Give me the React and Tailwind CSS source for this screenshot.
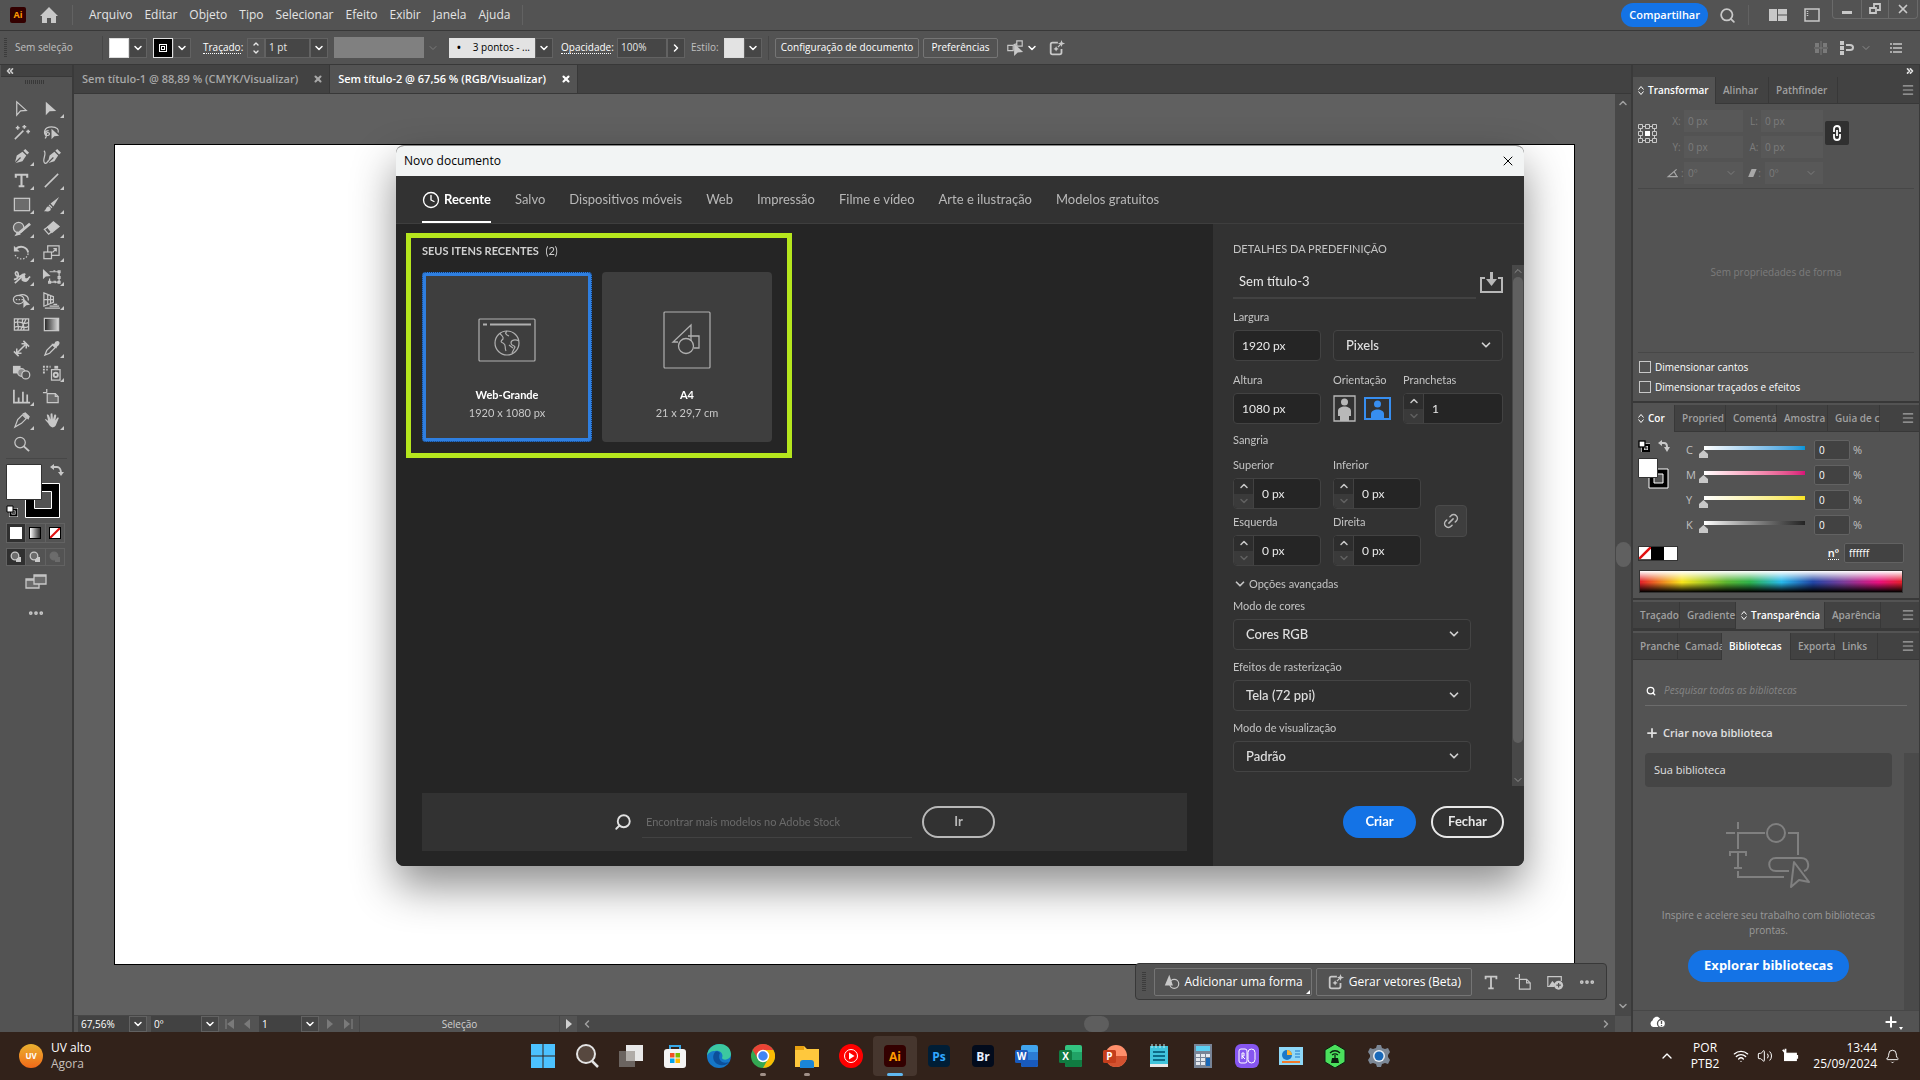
import React from 'react'
import {
  ChevronDown,
  ChevronUp,
  ChevronRight,
  ChevronLeft,
  ChevronsLeft,
  ChevronsRight,
  Search,
  Menu,
  X,
  Plus,
  Link2,
  Wifi,
  Volume2,
  Bell,
  Clock,
  MoreHorizontal,
} from 'lucide-react'

const menus = ['Arquivo', 'Editar', 'Objeto', 'Tipo', 'Selecionar', 'Efeito', 'Exibir', 'Janela', 'Ajuda']

const Svg = ({ className = 'size-5', box = '0 0 20 20', children }) => (
  <svg className={className} viewBox={box} fill="none" stroke="currentColor" strokeWidth="1.3" aria-hidden="true">
    {children}
  </svg>
)

// Tool palette, two columns, read row by row. "more" draws the corner flyout mark.
const tools = [
  { name: 'Seleção', icon: <path d="M5 3v14l4-4.5 6-.5z" /> },
  { name: 'Seleção direta', more: true, icon: <path d="M4 3v14l4-4 7-.5z" fill="currentColor" stroke="none" /> },
  {
    name: 'Varinha mágica',
    icon: <path d="M3 17 12 8m1-6v4m-2-2h4M17 7v4m-2-2h4M6 3v4M4 5h4M10 10l2-2" strokeWidth="1.6" />,
  },
  {
    name: 'Laço',
    icon: (
      <>
        <path d="M5 14C1 11 2 4 10 4c6 0 8 3 7 6M7 8c-4 0-5 4-2 5s4-3 1-3 0 6-3 6" />
        <path d="M10 6v11l3-3 5-.5z" fill="currentColor" stroke="none" />
      </>
    ),
  },
  {
    name: 'Caneta',
    more: true,
    icon: (
      <>
        <path d="M3 17 5 9l6-4 4 4-4 6zM12 4l2-2 4 4-2 2z" fill="currentColor" stroke="none" />
        <path d="m3 17 6-6" stroke="#535353" />
      </>
    ),
  },
  {
    name: 'Curvatura',
    icon: (
      <>
        <path d="m6 17 2-8 5-4 4 4-4 6zM14 4l2-2 4 4-2 2z" fill="currentColor" stroke="none" />
        <path d="m6 17 6-6" stroke="#535353" />
        <path d="M2 4c4 3-3 10 1 13 2 1 3-2 4-3" />
      </>
    ),
  },
  {
    name: 'Texto',
    more: true,
    icon: <path d="M4 7V4h12v3M10 4v12M7 16h6" strokeWidth="2.2" />,
  },
  { name: 'Segmento de linha', more: true, icon: <path d="M3 17 17 3" strokeWidth="1.6" /> },
  { name: 'Retângulo', more: true, icon: <rect x="2.5" y="3.500" width="16" height="13" fill="#6c6c6c" /> },
  {
    name: 'Pincel',
    more: true,
    icon: (
      <path
        d="M18 2 9 9l3 3zM8 10l3 3-1 1-3-3zM6 12c2 0 4 2 3 4-2 2-5 1-7 1 2-1 2-4 4-5z"
        fill="currentColor"
        stroke="none"
      />
    ),
  },
  {
    name: 'Shaper',
    more: true,
    icon: (
      <>
        <circle cx="7" cy="9" r="5.500" fill="#6c6c6c" />
        <path d="M7 15 19 5" strokeWidth="3" />
        <path d="m4 17 4-1-2-2z" fill="currentColor" />
      </>
    ),
  },
  {
    name: 'Borracha',
    more: true,
    icon: (
      <>
        <path d="m2.500 11 4.500 5 3-2.500L6 8.500z" />
        <path d="m6 8.500 6-5.500 6 5-7.500 6z" fill="currentColor" />
      </>
    ),
  },
  {
    name: 'Girar',
    more: true,
    icon: (
      <>
        <path d="M4 6c5-4 12-2 13 4" strokeWidth="2" />
        <path d="M2 3v6h6z" fill="currentColor" stroke="none" />
        <path d="M17 11c-1 7-11 8-14 1" strokeDasharray="1.500 1.800" />
      </>
    ),
  },
  {
    name: 'Escala',
    more: true,
    icon: (
      <>
        <rect x="6" y="3" width="12" height="10" />
        <rect x="2" y="9.500" width="8" height="7" fill="#535353" />
        <path d="m11 10 4-4m-3 0h3v3" />
      </>
    ),
  },
  {
    name: 'Largura',
    more: true,
    icon: (
      <>
        <path d="M2 13c6 0 5-8 3-8s-2 4 1 5 7-5 7 0 3 4 6 0M3 17 14 7" strokeWidth="1.800" />
        <path d="M10 8c2-3 4 0 3 2s3 3 5 1c0 5-5 6-8 3z" fill="currentColor" stroke="none" />
      </>
    ),
  },
  {
    name: 'Transformação livre',
    more: true,
    icon: (
      <>
        <path d="M1 2v11l3-3 5-.5z" fill="currentColor" stroke="none" />
        <path d="M8 5h10v11H8v-4" />
        <path d="M12 4h2M17 4h2v2h-2zM17 10h2v2h-2zM17 15h2v2h-2zM12 15h2v2M7 15h2v2H7z" />
      </>
    ),
  },
  {
    name: 'Construtor de formas',
    more: true,
    icon: (
      <>
        <ellipse cx="7" cy="9" rx="5.500" ry="4.500" />
        <path d="M7 5c6-3 11 1 10 5" />
        <path d="M4 9h9" strokeDasharray="1.500 1.500" />
        <path d="M12 8v10l3-3 4-.5z" fill="currentColor" stroke="none" />
      </>
    ),
  },
  {
    name: 'Grade de perspectiva',
    more: true,
    icon: <path d="M2 2v14l10-4V6zM2 9h10M6 4v10M9 5v8M3 18h16M8 16h10M12 14h4" />,
  },
  {
    name: 'Malha',
    icon: <path d="M2.500 4h15v12h-15zM3 8c5-3 9 3 14 0M3 13c5-4 8 3 14-1M6 16C9 12 3 8 7 4M12 16c3-4-4-8 0-12M15 4l-6 12" />,
  },
  {
    name: 'Gradiente',
    icon: (
      <>
        <defs>
          <linearGradient id="toolGradient">
            <stop stopColor="#222" />
            <stop offset="1" stopColor="#ddd" />
          </linearGradient>
        </defs>
        <rect x="2.500" y="3.500" width="15" height="13" fill="url(#toolGradient)" />
      </>
    ),
  },
  {
    name: 'Cota',
    icon: <path d="m5 15 9-9M5 10v5h5M10 5h5v5M2 13l5 5M12 2l6 6" strokeWidth="1.600" />,
  },
  {
    name: 'Conta-gotas',
    more: true,
    icon: (
      <>
        <path d="m3 17 2-5 6-6 3 3-6 6z" />
        <path d="m10 5 5 5 1-2c4-2 3-8-2-5l-1 2z" fill="currentColor" stroke="none" />
      </>
    ),
  },
  {
    name: 'Mistura',
    icon: (
      <>
        <path d="M1 3h8v8H1z" fill="currentColor" stroke="none" />
        <circle cx="10" cy="10" r="4" fill="#8a8a8a" />
        <circle cx="14.500" cy="12.500" r="4.200" fill="#535353" />
      </>
    ),
  },
  {
    name: 'Pulverizador',
    more: true,
    icon: (
      <>
        <path d="M1 4h8M1 7h5M1 10h3" strokeDasharray="2 1.500" strokeWidth="2" />
        <path d="M13 3h4v3h-4z" fill="currentColor" stroke="none" />
        <rect x="10" y="7" width="9" height="11" />
        <circle cx="14.500" cy="12.500" r="2.200" strokeWidth="2" />
      </>
    ),
  },
  { name: 'Gráfico', more: true, icon: <path d="M2 3v13.500h17M7 16v-5M11.500 16V5M16 16V8" strokeWidth="1.800" /> },
  {
    name: 'Prancheta',
    icon: (
      <>
        <path d="M5 2v4M1 6h4M5.500 7H14l3 3v6.500H5.500z" fill="#6c6c6c" />
        <path d="M14 7v3h3" />
      </>
    ),
  },
  {
    name: 'Fatia',
    more: true,
    icon: (
      <>
        <path d="M3 17 6 9l5-5 4 4-5 5z" />
        <path d="m12 3 2-1 4 4-1 2z" fill="currentColor" />
      </>
    ),
  },
  {
    name: 'Mão',
    more: true,
    icon: (
      <path
        d="M6.500 13 3 9c1-1 2 0 3.500 1.500L5 4c1-1 2 0 2.500 1L9 9V3c1-1 2-1 2 0l.5 6L13 4c1-1 2 0 2 1l-1 5 2-3c1-.5 2 0 1.500 1L15 14c-1 4-6 5-8.500-1z"
        fill="currentColor"
        stroke="none"
      />
    ),
  },
  {
    name: 'Zoom',
    icon: (
      <>
        <circle cx="8.500" cy="8" r="5.500" />
        <path d="m12.500 12 5.500 5" strokeWidth="2" />
      </>
    ),
  },
]

const SparkBox = ({ className }) => (
  <Svg className={className}>
    <path d="M11 4H5a2 2 0 0 0-2 2v9a2 2 0 0 0 2 2h8a2 2 0 0 0 2-2v-4" strokeWidth="2" />
    <path d="m15 1 1 3 3 1-3 1-1 3-1-3-3-1 3-1zM9 8l1 2 2 1-2 1-1 2-1-2-2-1 2-1z" fill="currentColor" stroke="none" />
    <path d="m11 9 4-4" />
  </Svg>
)

const SwapIcon = ({ className }) => (
  <Svg className={className} box="0 0 12 12">
    <path d="M3 3h3c2 0 3 1 3 4" strokeWidth="2" />
    <path d="M0 3l4-3v6zM6 7h6l-3 5z" fill="currentColor" stroke="none" />
  </Svg>
)

const DefaultColors = ({ className }) => (
  <Svg className={className} box="0 0 12 12">
    <rect x="5" y="5" width="6" height="6" fill="none" stroke="#fff" strokeWidth="3" />
    <rect x="5" y="5" width="6" height="6" fill="none" stroke="#000" strokeWidth="2" />
    <rect x="1" y="1" width="6" height="6" fill="#fff" stroke="#000" />
  </Svg>
)

const NoneSwatch = ({ className }) => (
  <svg className={className} viewBox="0 0 12 12" aria-hidden="true">
    <path d="M0 0h12v12H0z" fill="#fff" />
    <path d="M0 12 12 0" stroke="#e01010" strokeWidth="2.500" />
  </svg>
)

const MenuBar = () => (
  <header className="flex h-[31px] shrink-0 items-center border-b border-[#383838] pl-2.5">
    <span className="flex size-4 items-center justify-center rounded-xs bg-[#330000] text-[9px] font-bold text-[#ff9a00]">Ai</span>
    <svg className="ml-3.5 size-[18px] fill-[#c8c8c8]" viewBox="0 0 18 18" aria-hidden="true">
      <path d="M9 1 0 10h2v7h5v-5h4v5h5v-7h2z" />
    </svg>
    <span className="mr-2.5 ml-3.5 h-5 w-px bg-[#626262]" />
    <nav className="flex">
      {menus.map((menu) => (
        <button key={menu} className="px-1.5 text-xs text-[#e4e4e4]">{menu}</button>
      ))}
    </nav>
    <span className="ml-1.5 h-5 w-px bg-[#626262]" />
    <button className="ml-auto h-6 rounded-full bg-[#1473e6] px-2 text-[11px] font-semibold text-white">Compartilhar</button>
    <button aria-label="Pesquisar" className="ml-[11px] text-[#c8c8c8]"><Search className="size-[17px]" strokeWidth={2.500} /></button>
    <span className="mr-5 ml-3 h-5 w-px bg-[#626262]" />
    <button aria-label="Espaços de trabalho" className="text-[#c8c8c8]">
      <svg className="h-3 w-[18px] fill-current" viewBox="0 0 18 12" aria-hidden="true"><path d="M0 0h8v12H0zM9 0h9v5.500H9zM9 6.500h9V12H9z" /></svg>
    </button>
    <button aria-label="Painel" className="ml-[17px] text-[#c8c8c8]">
      <Svg className="h-[14px] w-4" box="0 0 16 14"><path d="M1 1h14v12H1z" strokeWidth="1.500" /><path d="M3.500 3v6" strokeWidth="1.500" strokeDasharray="1 1" /></Svg>
    </button>
    <div className="mr-0.5 ml-3 flex h-[19px] self-start rounded-b border border-t-0 border-[#6a6a6a] text-[#c8c8c8]">
      <button aria-label="Minimizar" className="flex w-7 items-end justify-center pb-1"><span className="h-[3px] w-2.5 bg-current" /></button>
      <button aria-label="Restaurar" className="flex w-7 items-center justify-center border-x border-[#6a6a6a]">
        <Svg className="size-3" box="0 0 12 12"><path d="M1 5h6v5H1zM5 4V1h6v6H8" strokeWidth="1.800" /></Svg>
      </button>
      <button aria-label="Fechar aplicativo" className="flex w-7 items-center justify-center"><X className="size-3.5" strokeWidth={3} /></button>
    </div>
  </header>
)

const DropArrow = ({ label }) => (
  <button aria-label={label} className="flex w-[18px] items-center justify-center border border-[#626262] bg-[#464646] text-white">
    <ChevronDown className="size-3" strokeWidth={3} />
  </button>
)

const OptionsBar = () => (
  <div className="flex h-[34px] shrink-0 items-center border-b border-[#383838] pl-1 text-[11px] text-[#e8e8e8]">
    <span className="h-5 w-[3px] bg-[repeating-linear-gradient(#3c3c3c_0_1px,transparent_1px_2px)]" />
    <span className="ml-2 w-[87px] text-[10px] text-[#c0c0c0]">Sem seleção</span>
    <span className="mr-1.5 h-6 w-px bg-[#474747]" />
    <div className="flex h-5">
      <span className="w-5 border border-[#ddd] bg-white" />
      <DropArrow label="Preenchimento" />
    </div>
    <div className="ml-1.5 flex h-5">
      <span className="flex w-5 items-center justify-center border border-[#e0e0e0] bg-black">
        <span className="flex size-2 items-center justify-center border border-white"><span className="size-1 border border-white" /></span>
      </span>
      <DropArrow label="Cor do traçado" />
    </div>
    <label htmlFor="stroke" className="ml-3 w-[38px] border-b border-dotted border-white text-[10px] leading-3 font-medium text-white">Traçado:</label>
    <div className="ml-1.5 flex h-5">
      <div className="flex w-[18px] flex-col items-center justify-center border border-[#626262]">
        <button aria-label="Aumentar traçado"><ChevronUp className="h-2 w-3" strokeWidth={4} /></button>
        <button aria-label="Diminuir traçado"><ChevronDown className="h-2 w-3" strokeWidth={4} /></button>
      </div>
      <input id="stroke" defaultValue="1 pt" className="w-[45px] border border-[#626262] bg-[#464646] px-[3px] text-[10px]" />
      <DropArrow label="Espessura" />
    </div>
    <span className="ml-1.5 h-[21px] w-[90px] bg-[#808080]" />
    <ChevronDown className="ml-[3px] size-3 text-[#7a7a7a]" />
    <div className="ml-2.5 flex h-5">
      <span className="flex w-[86px] items-center bg-[#e3e3e3] pl-2 text-[10px] font-medium whitespace-nowrap text-black"><b className="mr-3">•</b>3 pontos - ...</span>
      <DropArrow label="Pincel" />
    </div>
    <label htmlFor="opacity" className="ml-2 w-[50px] border-b border-dotted border-white text-[10px] leading-3 text-white">Opacidade:</label>
    <div className="ml-1.5 flex h-5">
      <input id="opacity" defaultValue="100%" className="w-[50px] border border-[#626262] bg-[#464646] px-[3px] text-[10px]" />
      <button aria-label="Abrir opacidade" className="flex w-[18px] items-center justify-center border border-[#626262] bg-[#464646] text-white"><ChevronRight className="size-3" strokeWidth={3} /></button>
    </div>
    <span className="ml-1.5 w-[33px] text-[10px] text-[#c0c0c0]">Estilo:</span>
    <div className="flex h-5">
      <span className="w-5 border border-[#ddd] bg-[#e3e3e3]" />
      <DropArrow label="Estilo" />
    </div>
    <span className="mr-1.5 ml-1.5 h-6 w-px bg-[#474747]" />
    <button className="h-5 w-[144px] rounded-xs border border-[#757575] text-[10px] font-medium text-white">Configuração de documento</button>
    <button className="ml-1 h-5 w-[75px] rounded-xs border border-[#757575] text-[10px] font-medium text-white">Preferências</button>
    <button aria-label="Selecionar semelhantes" className="ml-2 text-[#c8c8c8]">
      <Svg className="size-[18px]"><path d="M2 7h6v6H2zM12 2h6v6h-6zM8 7l4-2" /><path d="M9 5v14l4-4 6-.5z" fill="currentColor" stroke="none" /></Svg>
    </button>
    <ChevronDown className="ml-0.5 size-3 text-white" strokeWidth={3} />
    <button aria-label="Gerar" className="ml-2.5 text-[#c8c8c8]"><SparkBox className="size-[18px]" /></button>
    <div className="mr-[18px] ml-auto flex items-center text-[#c8c8c8]">
      <Svg className="size-3.5 text-[#7a7a7a]" box="0 0 14 14"><path d="M1 2h4v4H1zM9 2h4v4H9zM1 8h4v4H1zM9 8h4v4H9z" fill="currentColor" stroke="none" /><path d="M7 0v14M0 7h14" strokeWidth="1" /></Svg>
      <Svg className="ml-3 size-3.5" box="0 0 14 14"><path d="M0 0h4v4H0zM0 5h4v4H0zM0 10h4v4H0z" fill="currentColor" stroke="none" /><path d="M6 4h4c4 0 4 5 0 5H6" strokeWidth="2" /></Svg>
      <ChevronDown className="mx-1.5 size-3 text-[#8a8a8a]" />
      <Svg className="ml-3 h-[10px] w-3" box="0 0 12 10"><path d="M0 1h2M3 1h9M0 5h2M3 5h9M0 9h2M3 9h9" strokeWidth="1.600" /></Svg>
    </div>
  </div>
)

const Toolbar = () => (
  <aside className="flex w-[74px] shrink-0 flex-col border-r-2 border-[#3a3a3a] pl-px text-[#c8c8c8]">
    <button aria-label="Recolher ferramentas" className="flex h-3 shrink-0 items-center border-b border-[#383838] bg-[#424242] pl-1"><ChevronsLeft className="size-2.5" strokeWidth={4} /></button>
    <span className="mt-[3px] ml-6 h-1 w-5 shrink-0 bg-[repeating-linear-gradient(90deg,#383838_0_1px,transparent_1px_2px)]" />
    <div className="mt-3 grid h-[360px] shrink-0 grid-cols-[30px_30px] grid-rows-[repeat(15,24px)] pl-[5px]">
      {tools.map((tool) => (
        <button key={tool.name} aria-label={tool.name} className="relative flex items-center justify-center">
          <Svg className="size-[19px]">{tool.icon}</Svg>
          {tool.more && <span className="absolute right-0.5 bottom-0.5 border-b-4 border-l-4 border-b-[#c8c8c8] border-l-transparent" />}
        </button>
      ))}
    </div>
    <span className="mx-[5px] mt-0.5 h-px shrink-0 bg-[#474747]" />
    <svg className="mt-1 ml-1 h-14 w-[60px] shrink-0" viewBox="0 0 60 56" aria-hidden="true">
      <path d="M20.500 20.500h34v34h-34z" fill="#000" stroke="#fff" />
      <path d="M29.500 28.500h17v17h-17z" fill="#535353" stroke="#fff" />
      <path d="M1.500 1.500h35v35h-35z" fill="#fff" stroke="#333" />
      <path d="M48 4h4c2 0 4 2 4 6" stroke="#c8c8c8" strokeWidth="2" fill="none" />
      <path d="m45 4 4-3v6zM53 9h6l-3 4z" fill="#c8c8c8" />
      <path d="M5.500 46.500h6v6h-6z" fill="none" stroke="#fff" strokeWidth="3" />
      <path d="M5.500 46.500h6v6h-6z" fill="none" stroke="#000" strokeWidth="2" />
      <path d="M2 43h6v6H2z" fill="#fff" stroke="#000" />
    </svg>
    <div className="mt-1 ml-[5px] flex h-5 w-[59px] shrink-0 border border-[#626262]">
      <button aria-label="Cor" className="flex flex-1 items-center justify-center bg-[#303030]"><span className="size-3 bg-white" /></button>
      <button aria-label="Gradiente sólido" className="flex flex-1 items-center justify-center border-x border-[#626262]"><span className="size-3 border border-black bg-linear-to-r from-white to-[#333]" /></button>
      <button aria-label="Nenhum" className="flex flex-1 items-center justify-center"><NoneSwatch className="size-3 border border-black" /></button>
    </div>
    <div className="mt-[5px] ml-[5px] flex h-[18px] w-[59px] shrink-0 border border-[#626262]">
      {['bg-[#303030] text-[#c8c8c8]', 'border-x border-[#626262] text-[#c8c8c8]', 'text-[#6c6c6c]'].map((style, i) => (
        <button key={style} aria-label={`Modo de desenho ${i + 1}`} className={`flex flex-1 items-center justify-center ${style}`}>
          <Svg className="size-3" box="0 0 12 12"><path d="M6 6h5v5H6z" fill="currentColor" stroke="none" /><circle cx="5" cy="5" r="3.800" fill="#6c6c6c" /><path d="M7 7h4v4H7z" fill="currentColor" stroke="none" /></Svg>
        </button>
      ))}
    </div>
    <button aria-label="Modo de tela" className="mt-2 ml-6 w-[22px]">
      <Svg className="h-4 w-[22px]" box="0 0 22 16"><path d="M1 5h13v9H1z" fill="#6c6c6c" /><path d="M9 1h12v9H9z" fill="#6c6c6c" /><path d="M9 2h12M1 6h8" /></Svg>
    </button>
    <button aria-label="Editar barra" className="mt-3.5 ml-[26px] w-5"><MoreHorizontal className="size-[18px]" strokeWidth={3} /></button>
  </aside>
)

const DocTab = ({ title, active }) => (
  <div className={active ? 'flex items-center border-r border-[#383838] bg-[#535353] pr-1.5 pl-2 text-white' : 'flex items-center border-r border-[#383838] pr-1.5 pl-2 text-[#a8a8a8]'}>
    <button className="text-[11px] font-semibold">{title}</button>
    <button aria-label={`Fechar ${title}`} className="ml-[15px]"><X className="size-2.5" strokeWidth={5} /></button>
  </div>
)

const StatusBar = () => (
  <div className="flex h-[17px] shrink-0 items-stretch border-t border-[#474747] bg-[#535353] text-[10px] text-white">
    <input aria-label="Zoom" defaultValue="67,56%" className="ml-1 w-[51px] bg-[#424242] px-[3px]" />
    <DropArrow label="Níveis de zoom" />
    <input aria-label="Rotação" defaultValue="0º" className="ml-1 w-[50px] bg-[#424242] px-[3px]" />
    <DropArrow label="Níveis de rotação" />
    <div className="flex w-10 items-center justify-center gap-2 text-[#7a7a7a]">
      <Svg className="size-2.5" box="0 0 10 10"><path d="M1 0v10" /><path d="M9 0v10L2 5z" fill="currentColor" stroke="none" /></Svg>
      <Svg className="size-2.5" box="0 0 10 10"><path d="M7 0v10L1 5z" fill="currentColor" stroke="none" /></Svg>
    </div>
    <input aria-label="Prancheta atual" defaultValue="1" className="w-[42px] bg-[#424242] px-[3px]" />
    <DropArrow label="Pranchetas" />
    <div className="flex w-10 items-center justify-center gap-2 text-[#7a7a7a]">
      <Svg className="size-2.5" box="0 0 10 10"><path d="M2 0v10l6-5z" fill="currentColor" stroke="none" /></Svg>
      <Svg className="size-2.5" box="0 0 10 10"><path d="M9 0v10" /><path d="M1 0v10l6-5z" fill="currentColor" stroke="none" /></Svg>
    </div>
    <span className="w-[201px] border-x border-[#474747] text-center leading-[17px] text-[#d0d0d0]">Seleção</span>
    <button aria-label="Mostrar" className="flex w-[17px] items-center justify-center">
      <Svg className="size-2.5 text-[#d0d0d0]" box="0 0 10 10"><path d="M2 0v10l6-5z" fill="currentColor" stroke="none" /></Svg>
    </button>
    <div className="flex flex-1 items-center bg-[#484848] text-[#a0a0a0]">
      <button aria-label="Rolar para a esquerda" className="ml-1"><ChevronLeft className="size-3" strokeWidth={3} /></button>
      <div className="flex flex-1 justify-center"><span className="h-4 w-[25px] rounded-full bg-[#5e5e5e]" /></div>
      <button aria-label="Rolar para a direita" className="mr-[3px]"><ChevronRight className="size-3" strokeWidth={3} /></button>
    </div>
    <span className="w-4" />
  </div>
)

const ContextBar = () => (
  <div className="absolute right-2 bottom-[15px] flex h-[37px] items-center rounded-sm border border-[#383838] bg-[#535353] text-[#c8c8c8]">
    <span className="mr-2 ml-1.5 h-5 w-1 bg-[repeating-linear-gradient(#3c3c3c_0_1px,transparent_1px_2px)]" />
    <button className="relative flex h-7 items-center gap-1 rounded-xs border border-[#757575] px-2 text-xs text-white">
      <Svg className="size-[18px] text-[#c8c8c8]"><circle cx="12.500" cy="12" r="5" /><path d="M7 2 2 14h9z" fill="currentColor" stroke="none" /></Svg>
      Adicionar uma forma
      <span className="absolute right-px bottom-px border-b-4 border-l-4 border-b-white border-l-transparent" />
    </button>
    <button className="ml-1 flex h-7 items-center gap-1 rounded-xs border border-[#757575] px-2.5 text-xs text-white">
      <SparkBox className="size-[18px] text-[#c8c8c8]" />
      Gerar vetores (Beta)
    </button>
    <div className="flex items-center gap-3.5 px-2.5">
      <button aria-label="Texto de contexto"><Svg className="size-[18px]"><path d="M4 7V4h12v3M10 4v13M7 17h6" strokeWidth="2" /></Svg></button>
      <button aria-label="Nova prancheta"><Svg className="size-[18px]"><path d="M6 1v5M1 6h4M6 7h8l4 4v7H6z" /><path d="M14 7v4h4" /></Svg></button>
      <button aria-label="Inserir imagem">
        <Svg className="size-[18px]"><path d="M9 15H2V4h15v5" /><path d="m3 15 4-6 3 3v3z" fill="currentColor" stroke="none" /><circle cx="14" cy="13.500" r="5" fill="currentColor" stroke="none" /><path d="M14 11v5M11.500 13.500h5" stroke="#535353" /></Svg>
      </button>
      <button aria-label="Mais opções"><MoreHorizontal className="size-[18px]" strokeWidth={3} /></button>
    </div>
  </div>
)

const Workspace = () => (
  <main className="flex min-w-0 flex-1 flex-col">
    <div className="flex h-[29px] shrink-0 border-b border-[#383838] bg-[#424242]">
      <DocTab title="Sem título-1 @ 88,89 % (CMYK/Visualizar)" />
      <DocTab title="Sem título-2 @ 67,56 % (RGB/Visualizar)" active />
    </div>
    <div className="flex min-h-0 flex-1">
      <div className="relative flex min-w-0 flex-1 bg-[#606060] px-10 py-[50px]">
        <div className="flex-1 border border-black bg-white" />
        <ContextBar />
      </div>
      <div className="flex w-4 flex-col items-center justify-between bg-[#484848] py-[3px] text-[#a0a0a0]">
        <button aria-label="Rolar para cima"><ChevronUp className="size-3" strokeWidth={3} /></button>
        <span className="h-[25px] w-[15px] rounded-full bg-[#606060]" />
        <button aria-label="Rolar para baixo"><ChevronDown className="size-3" strokeWidth={3} /></button>
      </div>
    </div>
    <StatusBar />
  </main>
)

const SortMark = () => (
  <Svg className="mr-1 h-[9px] w-[6px] shrink-0" box="0 0 6 9"><path d="m.5 3.500 2.500-3 2.500 3M.5 5.500l2.500 3 2.500-3" strokeWidth="1" /></Svg>
)

const PanelTabs = ({ tabs, active }) => (
  <div className="flex h-[27px] shrink-0 border-b border-[#383838] bg-[#424242] text-[10px] font-semibold">
    {tabs.map(([name, width, sort]) => (
      <button
        key={name}
        className={`flex shrink-0 items-center border-r border-[#383838] whitespace-nowrap ${width} ${sort ? 'pl-[5px]' : 'pl-[7px]'} ${name === active ? '-mb-px bg-[#535353] text-white' : 'text-[#a0a0a0]'}`}
      >
        {sort && <SortMark />}
        {name}
      </button>
    ))}
    <button aria-label={`Opções de ${active}`} className="mr-1 ml-auto text-[#a8a8a8]"><Menu className="size-3.5" /></button>
  </div>
)

const TransformPanel = () => (
  <section className="flex h-[326px] shrink-0 flex-col border-b-2 border-[#383838]">
    <PanelTabs active="Transformar" tabs={[['Transformar', 'w-[83px]', true], ['Alinhar', 'w-[53px]'], ['Pathfinder', 'w-[69px]']]} />
    <div className="flex items-start px-[5px] pt-1.5 text-[10px] text-[#7c7c7c]">
      <Svg className="mt-3.5 size-[19px] text-[#c8c8c8]" box="0 0 19 19">
        <path d="M.5.5h4v4h-4zM7.500.5h4v4h-4zM14.500.5h4v4h-4zM.5 7.500h4v4h-4zM14.500 7.500h4v4h-4zM.5 14.500h4v4h-4zM7.500 14.500h4v4h-4zM14.500 14.500h4v4h-4zM5 2.500h2M12 2.500h2M5 16.500h2M12 16.500h2M2.500 5v2M2.500 12v2M16.500 5v2M16.500 12v2" strokeWidth="1" />
        <path d="M7 7h5v5H7z" fill="#fff" stroke="none" />
      </Svg>
      <div className="ml-2 grid grid-cols-[19px_59px_18px_62px] gap-y-1 text-center">
        {[['X', 'L'], ['Y', 'A']].map((pair) => pair.map((axis) => (
          <React.Fragment key={axis}>
            <label htmlFor={`axis${axis}`} className="pl-1 leading-[22px]">{axis}:</label>
            <input id={`axis${axis}`} defaultValue="0 px" disabled className="h-[22px] w-full bg-[#585858] px-1" />
          </React.Fragment>
        )))}
        <label htmlFor="angle" className="flex items-center"><Svg className="h-3 w-4 text-[#a8a8a8]"><path d="M16 4 2 16h16M12 8l4 7" strokeWidth="2" /></Svg>:</label>
        <div className="relative">
          <select id="angle" disabled className="h-[22px] w-full appearance-none bg-[#585858] px-1"><option>0º</option></select>
          <ChevronDown className="pointer-events-none absolute top-[5px] right-1.5 size-3" />
        </div>
        <label htmlFor="shear" className="flex items-center pl-1"><Svg className="h-3 w-4 text-[#a8a8a8]"><path d="M8 3h9l-6 14H2z" fill="currentColor" stroke="none" /></Svg>:</label>
        <div className="relative pl-1">
          <select id="shear" disabled className="h-[22px] w-full appearance-none bg-[#585858] px-1"><option>0º</option></select>
          <ChevronDown className="pointer-events-none absolute top-[5px] right-1.5 size-3" />
        </div>
      </div>
      <button aria-label="Restringir proporções" className="mt-[11px] ml-0.5 flex size-6 items-center justify-center rounded-xs bg-[#303030] text-white">
        <Svg className="h-4 w-2.5" box="0 0 10 16"><path d="M2 7V4c0-4 6-4 6 0v3M2 9v3c0 4 6 4 6 0V9M5 5v6" strokeWidth="1.800" /></Svg>
      </button>
    </div>
    <div className="mx-[5px] mt-1 flex flex-1 items-center justify-center border-y border-[#474747] pt-1 text-[10px] text-[#7c7c7c]">Sem propriedades de forma</div>
    <div className="flex flex-col px-1.5 pt-1 pb-1 text-[10px] font-medium text-white">
      {['Dimensionar cantos', 'Dimensionar traçados e efeitos'].map((name) => (
        <label key={name} className="flex h-5 items-center gap-1">
          <input type="checkbox" className="size-3 appearance-none border border-[#c8c8c8]" />
          {name}
        </label>
      ))}
    </div>
  </section>
)

const channels = [
  { name: 'C', track: 'bg-linear-to-r from-white to-[#0095d8]' },
  { name: 'M', track: 'bg-linear-to-r from-white to-[#d81078]' },
  { name: 'Y', track: 'bg-linear-to-r from-white to-[#f8e41c]' },
  { name: 'K', track: 'bg-linear-to-r from-white to-[#242424]' },
]

const ColorPanel = () => (
  <section className="mt-0.5 flex h-[195px] shrink-0 flex-col border-b-2 border-[#383838]">
    <PanelTabs
      active="Cor"
      tabs={[['Cor', 'w-[42px]', true], ['Propried', 'w-[51px]'], ['Comentá', 'w-[51px]'], ['Amostra', 'w-[51px]'], ['Guia de c', 'w-[52px]']]}
    />
    <div className="flex px-[5px] pt-2">
      <div className="w-12 shrink-0">
        <div className="flex items-center gap-2 text-[#c8c8c8]"><DefaultColors className="size-3" /><SwapIcon className="size-3" /></div>
        <svg className="mt-1.5 size-[31px]" viewBox="0 0 31 31" aria-hidden="true">
          <path d="M11 11h19v19H11z" fill="#000" stroke="#fff" />
          <path d="M16 16h9v9h-9z" fill="#535353" stroke="#fff" />
          <path d="M.5.500h19v19H.5z" fill="#fff" stroke="#333" />
        </svg>
      </div>
      <div className="flex flex-col gap-[5px]">
        {channels.map((c) => (
          <div key={c.name} className="flex h-5 items-center text-[11px] text-[#c0c0c0]">
            <label htmlFor={`ch${c.name}`} className="w-[13px]">{c.name}</label>
            <div className="flex w-[111px] flex-col pt-1">
              <span className={`mx-[5px] h-1 ${c.track}`} />
              <input
                id={`ch${c.name}`}
                type="range"
                defaultValue="0"
                className="h-2 w-full appearance-none bg-transparent [&::-webkit-slider-thumb]:h-2 [&::-webkit-slider-thumb]:w-[9px] [&::-webkit-slider-thumb]:appearance-none [&::-webkit-slider-thumb]:bg-[#c8c8c8] [&::-webkit-slider-thumb]:[clip-path:polygon(50%_0,100%_50%,100%_100%,0_100%,0_50%)]"
              />
            </div>
            <input aria-label={`${c.name} em porcentagem`} defaultValue="0" className="ml-1 h-5 w-9 rounded-xs border border-[#626262] bg-[#424242] px-1 text-[10px] text-white" />
            <span className="ml-[3px]">%</span>
          </div>
        ))}
      </div>
    </div>
    <div className="mt-2 flex items-center px-[5px] text-white">
      <div className="flex border border-[#333]"><NoneSwatch className="size-3" /><span className="size-[13px] bg-black" /><span className="size-[13px] bg-white" /></div>
      <label htmlFor="hex" className="ml-auto border-b border-dotted border-white text-[11px] leading-3 font-semibold">nº</label>
      <input id="hex" defaultValue="ffffff" className="mr-2.5 ml-[5px] h-5 w-[60px] rounded-xs border border-[#626262] bg-[#424242] px-1 text-[10px]" />
    </div>
    <div className="mt-[7px] mr-4 ml-1.5 h-[23px] border border-[#333] bg-[linear-gradient(#fff_0%,transparent_50%,transparent_55%,#000_100%),linear-gradient(90deg,#e3202a,#f8e41c_16%,#5cb531_33%,#2eb24c_42%,#28b8ea_54%,#2145a5_66%,#7d3c98_78%,#e8107e_91%,#e3202a)]" />
  </section>
)

const LibrariesPanel = () => (
  <section className="mt-0.5 flex min-h-0 flex-1 flex-col">
    <PanelTabs
      active="Bibliotecas"
      tabs={[['Pranche', 'w-[45px]'], ['Camada', 'w-[44px]'], ['Bibliotecas', 'w-[69px]'], ['Exporta', 'w-[44px]'], ['Links', 'w-[43px]']]}
    />
    <div className="mx-3 mt-4 flex h-[30px] items-center border-b border-[#6c6c6c] pl-px">
      <Search className="size-2.5 text-white" strokeWidth={3} />
      <input aria-label="Pesquisar todas as bibliotecas" placeholder="Pesquisar todas as bibliotecas" className="ml-2 flex-1 text-[10px] italic placeholder:text-[#858585]" />
    </div>
    <button className="mt-[15px] ml-3 flex h-6 items-center gap-1 text-[11px] font-semibold text-[#e0e0e0]"><Plus className="size-3.5" strokeWidth={3} />Criar nova biblioteca</button>
    <div className="mt-2 flex min-h-0 flex-1 pl-3">
      <div className="mr-3 flex flex-1 flex-col items-center">
        <button className="h-[34px] w-full rounded-sm bg-[#454545] pl-[9px] text-left text-[11px] text-[#e0e0e0]">Sua biblioteca</button>
        <Svg className="mt-[35px] h-[66px] w-[85px] text-[#808080]" box="0 0 85 66">
          <g strokeWidth="2">
            <path d="M0 11h9M12 0v7M12 27V11h27M62 11h10v22M12 49v6h46" />
            <circle cx="50" cy="11" r="9" />
            <path d="M4 34v-4h16v4M12 30v16M8 46h8" />
            <path d="M63 49H50c-9 0-9-13 0-13h25c9 0 9 12 3 13" />
            <path d="m68 40-3 25 8-7 10 2z" strokeLinejoin="round" />
          </g>
        </Svg>
        <p className="mt-5 text-center text-[10px] leading-[15px] text-[#9a9a9a]">Inspire e acelere seu trabalho com bibliotecas prontas.</p>
        <button className="mt-3 h-8 rounded-full bg-[#1473e6] px-4 text-[13px] font-bold whitespace-nowrap text-white">Explorar bibliotecas</button>
      </div>
      <span className="w-[15px] bg-[#4a4a4a]" />
    </div>
    <div className="flex h-[22px] shrink-0 items-center justify-between border-t border-[#474747] px-4 text-white">
      <Svg className="h-3 w-[17px]" box="0 0 17 12"><path d="M4 11a3.500 3.500 0 0 1-.5-6.500C5-1 11 0 11.500 4c4 0 4 7 0 7z" fill="currentColor" stroke="none" /><circle cx="12.500" cy="7.500" r="4" fill="#fff" stroke="#535353" /><path d="M12.500 5v3M12.500 9v1" stroke="#535353" /></Svg>
      <button aria-label="Adicionar elementos" className="flex items-end">
        <Plus className="size-4" strokeWidth={3} />
        <span className="border-x-2 border-t-3 border-x-transparent border-t-current" />
      </button>
    </div>
  </section>
)

const RightDock = () => (
  <aside className="flex w-[289px] shrink-0 flex-col border-r border-l-2 border-[#3a3a3a]">
    <button aria-label="Recolher painéis" className="flex h-3 shrink-0 items-center justify-end bg-[#424242] pr-1 text-[#e0e0e0]"><ChevronsRight className="size-2.5" strokeWidth={4} /></button>
    <TransformPanel />
    <ColorPanel />
    <section className="mt-0.5 h-[29px] shrink-0 border-b-2 border-[#383838]">
      <PanelTabs
        active="Transparência"
        tabs={[['Traçado', 'w-[47px]'], ['Gradiente', 'w-[56px]'], ['Transparência', 'w-[89px]', true], ['Aparência', 'w-[56px]']]}
      />
    </section>
    <LibrariesPanel />
  </aside>
)

const categories = ['Salvo', 'Dispositivos móveis', 'Web', 'Impressão', 'Filme e vídeo', 'Arte e ilustração', 'Modelos gratuitos']

const FieldLabel = ({ htmlFor, children }) => (
  <label htmlFor={htmlFor} className="mb-1 block text-[11px] leading-[18px] text-[#c4c4c4]">{children}</label>
)

const TextField = ({ id, label, value }) => (
  <div className="w-[88px]">
    <FieldLabel htmlFor={id}>{label}</FieldLabel>
    <input id={id} defaultValue={value} className="h-[31px] w-full rounded-sm border border-[#424242] bg-[#252525] px-2 text-[12px] text-[#e8e8e8]" />
  </div>
)

const SpinField = ({ id, label, value, width }) => (
  <div className={width}>
    <FieldLabel htmlFor={id}>{label}</FieldLabel>
    <div className="flex h-[31px] overflow-hidden rounded-sm border border-[#424242] bg-[#252525]">
      <div className="flex w-5 shrink-0 flex-col border-r border-[#424242]">
        <button aria-label={`Aumentar ${label}`} className="flex flex-1 items-center justify-center bg-[#2d2d2d] text-[#c8c8c8]"><ChevronUp className="size-3" strokeWidth={3} /></button>
        <button aria-label={`Diminuir ${label}`} className="flex flex-1 items-center justify-center bg-[#3a3a3a] text-[#606060]"><ChevronDown className="size-3" strokeWidth={3} /></button>
      </div>
      <input id={id} defaultValue={value} className="w-full min-w-0 px-2 text-[12px] text-[#e8e8e8]" />
    </div>
  </div>
)

const SelectBox = ({ id, value, label }) => (
  <div className="relative">
    <select id={id} aria-label={label} className="h-[31px] w-full appearance-none rounded-sm border border-[#444] bg-[#2f2f2f] px-3 text-[13px] font-medium text-[#e0e0e0]">
      <option>{value}</option>
    </select>
    <ChevronDown className="pointer-events-none absolute top-2 right-2.5 size-3.5 text-[#d0d0d0]" strokeWidth={3} />
  </div>
)

const advanced = [
  { id: 'colorMode', label: 'Modo de cores', value: 'Cores RGB' },
  { id: 'raster', label: 'Efeitos de rasterização', value: 'Tela (72 ppi)' },
  { id: 'preview', label: 'Modo de visualização', value: 'Padrão' },
]

const PresetCard = ({ selected, name, size, children }) => (
  <button className={`flex size-[170px] flex-col items-center rounded-sm bg-[#3e3e3e] text-[11px] text-[#c8c8c8] ${selected ? 'border-4 border-[#2f7fe0] outline-1 -outline-offset-1 outline-dotted outline-[#123a70]' : 'border-4 border-[#3e3e3e]'}`}>
    <span className="mt-[34px] flex h-[60px] items-center text-[#b0b0b0]">{children}</span>
    <span className="mt-4 leading-[18px] font-bold text-white">{name}</span>
    <span className="leading-[18px]">{size}</span>
  </button>
)

const PresetDetails = () => (
  <div className="flex h-full w-[311px] shrink-0 flex-col bg-[#323232]">
    <h3 className="mt-4 ml-5 text-[11px] leading-[18px] text-[#c4c4c4]">DETALHES DA PREDEFINIÇÃO</h3>
    <div className="mt-[7px] flex">
      <div className="min-w-0 flex-1 pr-[9px] pl-5">
        <div className="flex h-[34px] items-center gap-1">
          <input aria-label="Nome do documento" defaultValue="Sem título-3" className="h-[34px] w-[243px] border-b-2 border-[#424242] px-1.5 text-[13px] text-[#e8e8e8]" />
          <button aria-label="Salvar predefinição" className="text-[#b8b8b8]">
            <Svg className="h-[21px] w-[23px]" box="0 0 23 21"><path d="M5 6H1v14h21V6h-4" strokeWidth="2" /><path d="M11.500 0v9" strokeWidth="3" /><path d="M6 7h11l-5.500 7z" fill="currentColor" stroke="none" /></Svg>
          </button>
        </div>
        <div className="mt-[9px] flex items-end gap-3">
          <TextField id="docWidth" label="Largura" value="1920 px" />
          <div className="flex-1"><SelectBox id="unit" label="Unidade" value="Pixels" /></div>
        </div>
        <div className="mt-2.5 flex">
          <TextField id="docHeight" label="Altura" value="1080 px" />
          <div className="ml-3 w-[70px]">
            <span className="mb-1 block text-[11px] leading-[18px] text-[#c4c4c4]">Orientação</span>
            <div className="flex h-[31px] items-center gap-2">
              <button aria-label="Retrato" className="text-[#b8b8b8]">
                <Svg className="h-[27px] w-[23px]" box="0 0 23 27"><path d="M1 1h21v25H1z" /><circle cx="11.500" cy="7" r="3.500" fill="currentColor" stroke="none" /><path d="M5 21v-5c0-6 13-6 13 0v5h-2v5H7v-5z" fill="currentColor" stroke="none" /></Svg>
              </button>
              <button aria-label="Paisagem" className="text-[#378ef0]">
                <Svg className="h-[23px] w-[27px]" box="0 0 27 23"><path d="M1 1h25v21H1z" strokeWidth="2" /><circle cx="13.500" cy="7" r="3.500" fill="currentColor" stroke="none" /><path d="M7 21v-4c0-6 13-6 13 0v4z" fill="currentColor" stroke="none" /></Svg>
              </button>
            </div>
          </div>
          <SpinField id="boards" label="Pranchetas" value="1" width="flex-1" />
        </div>
        <h4 className="my-[7px] text-[11px] leading-[18px] text-[#c4c4c4]">Sangria</h4>
        <div className="flex items-center gap-3.5">
          <div className="grid grid-cols-[88px_88px] gap-x-3 gap-y-1">
            <SpinField id="bleedTop" label="Superior" value="0 px" />
            <SpinField id="bleedBottom" label="Inferior" value="0 px" />
            <SpinField id="bleedLeft" label="Esquerda" value="0 px" />
            <SpinField id="bleedRight" label="Direita" value="0 px" />
          </div>
          <button aria-label="Vincular sangria" className="mt-5 flex size-8 items-center justify-center rounded-sm border border-[#4a4a4a] bg-[#3e3e3e] text-[#b8b8b8]"><Link2 className="size-[18px] -rotate-45" /></button>
        </div>
        <button className="mt-[9px] flex items-center gap-0.5 text-[11px] leading-[18px] text-[#c4c4c4]"><ChevronDown className="size-3.5" strokeWidth={3} />Opções avançadas</button>
        <div className="mt-1 flex w-[238px] flex-col gap-2">
          {advanced.map((field) => (
            <div key={field.id}>
              <FieldLabel htmlFor={field.id}>{field.label}</FieldLabel>
              <SelectBox id={field.id} value={field.value} />
            </div>
          ))}
        </div>
      </div>
      <div className="flex h-[521px] w-3 flex-col items-center bg-[#484848] text-[#909090]">
        <button aria-label="Rolar detalhes para cima"><ChevronUp className="size-3" /></button>
        <span className="h-[466px] w-[10px] rounded-full bg-[#606060]" />
        <button aria-label="Rolar detalhes para baixo" className="mt-auto"><ChevronDown className="size-3" /></button>
      </div>
    </div>
    <div className="mt-5 mr-5 flex justify-end gap-[15px] text-[13px] font-bold">
      <button className="h-8 w-[73px] rounded-full bg-[#1473e6] text-white">Criar</button>
      <button className="h-8 w-[73px] rounded-full border-2 border-[#e8e8e8] text-[#e8e8e8]">Fechar</button>
    </div>
  </div>
)

const NewDocumentDialog = () => (
  <div role="dialog" aria-label="Novo documento" className="fixed inset-x-0 top-[145px] mx-auto w-[1128px] overflow-hidden rounded-lg border-t border-[#8a8a8a] bg-[#323232] font-['Lato','Open_Sans',sans-serif] shadow-[0_20px_44px_rgba(0,0,0,0.45)]">
    <div className="flex h-[30px] items-center justify-between bg-[#f2f4f4] px-2 font-['Open_Sans',sans-serif] text-xs text-black">
      <h2>Novo documento</h2>
      <button aria-label="Fechar janela"><X className="size-4" strokeWidth={1.500} /></button>
    </div>
    <nav className="flex h-12 gap-6 border-b border-[#3e3e3e] pl-[26px] text-[13px] text-[#b8b8b8]">
      <button className="flex items-center gap-1 border-b-2 border-white pt-0.5 font-bold text-white"><Clock className="size-[18px]" strokeWidth={1.800} />Recente</button>
      {categories.map((name) => (
        <button key={name} className="border-b-2 border-transparent pt-0.5">{name}</button>
      ))}
    </nav>
    <div className="flex">
      <div className="flex flex-1 flex-col bg-[#252525]">
        <section className="mt-[9px] ml-2.5 h-[225px] w-[386px] border-5 border-[#b5e61d] pt-1 pl-[11px]">
          <h3 className="text-[11px] leading-[18px] font-bold text-[#d0d0d0]">SEUS ITENS RECENTES <span className="ml-1 font-normal">(2)</span></h3>
          <div className="mt-3 flex gap-2.5">
            <PresetCard selected name="Web-Grande" size="1920 x 1080 px">
              <Svg className="h-11 w-[58px]" box="0 0 58 44">
                <g strokeWidth="1.200">
                  <rect x="1" y="1" width="56" height="42" rx="1" />
                  <path d="M5 6.500h4M12 6.500h41" strokeWidth="2" />
                  <circle cx="29" cy="25" r="12" />
                  <path d="M22 15c1 3 4 3 3 6-2 2-3 3 0 4 4 2 1 4 3 8M29 13c-3 3 0 4 2 5M41 23c-4-2-8-1-8 2s3 2 4 4l-3 6M31 27l4 3" />
                </g>
              </Svg>
            </PresetCard>
            <PresetCard name="A4" size="21 x 29,7 cm">
              <Svg className="h-[58px] w-12" box="0 0 48 58">
                <rect x="1" y="1" width="46" height="56" rx="1" strokeWidth="1.200" />
                <path d="M15 31H10L28 14v16M25 25h11v12h-5" />
                <circle cx="23" cy="35" r="7.500" />
              </Svg>
            </PresetCard>
          </div>
        </section>
        <form className="mx-[26px] mt-auto mb-[15px] flex h-[58px] items-center justify-center bg-[#323232]" onSubmit={(e) => e.preventDefault()}>
          <Search className="size-[18px] -scale-x-100 text-[#e0e0e0]" strokeWidth={2.500} />
          <input aria-label="Encontrar mais modelos no Adobe Stock" placeholder="Encontrar mais modelos no Adobe Stock" className="ml-2.5 h-8 w-[270px] border-b border-[#424242] px-1 text-[11px] placeholder:text-[#6a6a6a]" />
          <button className="ml-2.5 h-8 w-[73px] rounded-full border-2 border-[#b8b8b8] text-[13px] font-bold text-[#b8b8b8]">Ir</button>
        </form>
      </div>
      <div className="h-[642px]"><PresetDetails /></div>
    </div>
  </div>
)

const Badge = ({ fill, color, text, stroke }) => (
  <>
    <rect x="1" y="1" width="22" height="22" rx="4" fill={fill} stroke={stroke} />
    <text x="12" y="16.500" textAnchor="middle" fontSize="12" fontWeight="bold" fill={color}>{text}</text>
  </>
)

const Office = ({ dark, mid, light, letter }) => (
  <>
    <rect x="6" y="1" width="17" height="22" rx="2" fill={light} />
    <path d="M6 8h17v8H6z" fill={mid} />
    <path d="M6 16h17v5a2 2 0 0 1-2 2H8a2 2 0 0 1-2-2z" fill={dark} />
    <rect x="0" y="6" width="13" height="13" rx="1.500" fill={dark} />
    <text x="6.500" y="16" textAnchor="middle" fontSize="10" fontWeight="bold" fill="#fff">{letter}</text>
  </>
)

const apps = [
  { name: 'Iniciar', icon: <path d="M0 0h11.500v11.500H0zM12.500 0H24v11.500H12.500zM0 12.500h11.500V24H0zM12.500 12.500H24V24H12.500z" fill="#4cc2ff" /> },
  { name: 'Pesquisa', icon: <g stroke="#e4e4e4" fill="#57483f"><circle cx="11" cy="10" r="9" strokeWidth="2" /><path d="m17 17 6 6" strokeWidth="2.500" /></g> },
  { name: 'Visão de tarefas', icon: <><path d="M0 7h16v16H0z" fill="#6b6460" /><path d="M7 1h17v16H7z" fill="#e8e8e8" /><path d="M7 7h9v10H7z" fill="#b0aca8" /></> },
  { name: 'Loja', icon: <><path d="M7 6V2h10v4" fill="none" stroke="#38a8e8" strokeWidth="2" /><rect x="1" y="5" width="22" height="19" rx="3" fill="#f4f4f4" /><path d="M7 9h4.500v4.500H7z" fill="#f25022" /><path d="M12.500 9H17v4.500h-4.500z" fill="#7fba00" /><path d="M7 14.500h4.500V19H7z" fill="#00a4ef" /><path d="M12.500 14.500H17V19h-4.500z" fill="#ffb900" /></> },
  { name: 'Edge', icon: <><circle cx="12" cy="12" r="12" fill="#1577c8" /><path d="M0 12C1-3 23-4 24 10c0 6-8 7-9 4 2-5-3-8-7-7-4 0-7 2-8 5z" fill="#3cc8a0" /><path d="M8 8c-4 5-1 12 5 13 4 1 8-1 9-3-7 3-12-3-9-9-2-2-4-2-5-1z" fill="#0c4f9a" /></> },
  { name: 'Chrome', running: true, icon: <><circle cx="12" cy="12" r="12" fill="#34a853" /><path d="M1.600 6A12 12 0 0 1 22.400 6H12l-5 9z" fill="#ea4335" /><path d="M22.400 6A12 12 0 0 1 12 24l5-9-5-9z" fill="#fbbc04" /><circle cx="12" cy="12" r="5.500" fill="#4285f4" stroke="#fff" strokeWidth="1.500" /></> },
  { name: 'Explorador', running: true, icon: <><path d="M0 2h9l3 3h12v18H0z" fill="#ffc83d" /><path d="M0 2h9v4H0z" fill="#e8a010" /><path d="M5 24v-5c0-2 1-3 3-3h8c2 0 3 1 3 3v5z" fill="#1a86d8" /></> },
  { name: 'YouTube Music', icon: <><circle cx="12" cy="12" r="12" fill="#f00" /><circle cx="12" cy="12" r="6.500" fill="none" stroke="#fff" /><path d="M10 8.500v7l5.500-3.500z" fill="#fff" /></> },
  { name: 'Illustrator', active: true, icon: <Badge fill="#330000" color="#ff9a00" text="Ai" /> },
  { name: 'Photoshop', icon: <Badge fill="#001e36" color="#31a8ff" text="Ps" /> },
  { name: 'Bridge', icon: <Badge fill="#020b1c" color="#e8f0ff" text="Br" /> },
  { name: 'Word', icon: <Office dark="#185abd" mid="#2b7cd3" light="#41a5ee" letter="W" /> },
  { name: 'Excel', icon: <Office dark="#107c41" mid="#21a366" light="#33c481" letter="X" /> },
  { name: 'PowerPoint', icon: <><circle cx="13" cy="12" r="11" fill="#ff8f6b" /><path d="M2 12h22a11 11 0 0 1-22 0z" fill="#d35230" /><rect x="0" y="6" width="13" height="13" rx="1.500" fill="#c43e1c" /><text x="6.500" y="16" textAnchor="middle" fontSize="10" fontWeight="bold" fill="#fff">P</text></> },
  { name: 'Bloco de notas', icon: <><path d="M3 2h18v20H3z" fill="#40c4dc" /><path d="M3 20h18v3H3z" fill="#e8e8e8" /><path d="M6 8h12M6 12h12M6 16h12" stroke="#0c6c88" strokeWidth="1.800" /><path d="M5 0v4M9 0v4M13 0v4M17 0v4" stroke="#bdf0f8" /></> },
  { name: 'Calculadora', icon: <><path d="M3 0h18v24H3z" fill="#788496" /><path d="M5 2h14v5H5z" fill="#5cd0f4" /><path d="M5 10h4v3H5zM10 10h4v3h-4zM15 10h4v3h-4zM5 14h4v3H5zM10 14h4v3h-4zM5 18h4v3H5zM10 18h4v3h-4z" fill="#e4e8ee" /><path d="M15 14h4v8h-4z" fill="#1868b8" /></> },
  { name: 'Gravador', icon: <><rect width="24" height="24" rx="6" fill="#8656f0" /><rect x="4" y="5" width="8" height="14" rx="2" fill="none" stroke="#fff" /><rect x="13" y="5" width="7" height="14" rx="3.500" fill="none" stroke="#fff" /><path d="M7 9v6M7 9h2v3H7l3 3" fill="none" stroke="#fff" /></> },
  { name: 'Painel de controle', icon: <><path d="M0 3h24v18H0z" fill="#8ed8f8" /><circle cx="8" cy="11" r="5" fill="#1a78c8" /><path d="M8 6a5 5 0 0 1 5 5H8z" fill="#f8b030" /><path d="M16 7h5M16 10h5M16 13h5" stroke="#1a78c8" /><path d="M3 18h18" stroke="#f07828" strokeWidth="2" /></> },
  { name: 'VPN', icon: <><path d="m12 0 10 6v12l-10 6-10-6V6z" fill="#4be05c" stroke="#0c2010" /><path d="M12 11v3M7 9c3-3 7-3 10 0M9 11c2-1.500 4-1.500 6 0" fill="none" stroke="#0c2010" strokeWidth="1.300" /><path d="M9 14h6l1 5H8z" fill="#0c2010" /></> },
  { name: 'Configurações', icon: <><path d="M10 1h4l1 3 3 1 3-1 2 4-2 3v2l2 3-2 4-3-1-3 1-1 3h-4l-1-3-3-1-3 1-2-4 2-3v-2L1 8l2-4 3 1 3-1z" fill="#7c8896" /><circle cx="12" cy="12" r="6" fill="#e8eef4" /><circle cx="12" cy="12" r="4.500" fill="#1868b8" /></> },
]

const Taskbar = () => (
  <footer className="grid h-12 shrink-0 grid-cols-[1fr_auto_1fr] items-center bg-[#32221a] text-[12px] text-white">
    <button className="flex items-center gap-2 pl-[19px] text-left">
      <span className="flex size-6 items-center justify-center rounded-full bg-linear-to-b from-[#e8b030] to-[#f06818] text-[8px] font-bold">UV</span>
      <span className="leading-4">UV alto<span className="block text-[#c8c0bc]">Agora</span></span>
    </button>
    <div className="flex pl-0.5">
      {apps.map((app) => (
        <button key={app.name} aria-label={app.name} className={`relative flex h-10 w-11 items-center justify-center ${app.active ? 'rounded-sm bg-[#46362e]' : ''}`}>
          <svg className="size-6" viewBox="0 0 24 24" aria-hidden="true">{app.icon}</svg>
          {app.active && <span className="absolute bottom-0 h-[3px] w-4 rounded-full bg-[#60b8f0]" />}
          {app.running && <span className="absolute bottom-0 h-[3px] w-1.5 rounded-full bg-[#a09088]" />}
        </button>
      ))}
    </div>
    <div className="flex items-center justify-end pr-5">
      <button aria-label="Ícones ocultos"><ChevronUp className="size-4" /></button>
      <span className="ml-4 text-center leading-4">POR<br />PTB2</span>
      <Wifi className="ml-3.5 size-4" />
      <Volume2 className="ml-2 size-4" strokeWidth={1.500} />
      <Svg className="ml-2 size-[18px]"><rect x="4" y="7" width="13" height="8" fill="currentColor" /><path d="M18 9v4M2 3l4 5M5 2v5" strokeWidth="2" /></Svg>
      <span className="ml-3.5 text-right leading-4">13:44<br />25/09/2024</span>
      <Bell className="ml-2 size-[15px]" strokeWidth={1.500} />
    </div>
  </footer>
)

const App = () => (
  <div className="flex h-screen flex-col overflow-hidden bg-[#535353] font-['Open_Sans','Noto_Sans',sans-serif]">
    <MenuBar />
    <OptionsBar />
    <div className="flex min-h-0 flex-1">
      <Toolbar />
      <Workspace />
      <RightDock />
    </div>
    <Taskbar />
    <NewDocumentDialog />
  </div>
)

export default App
